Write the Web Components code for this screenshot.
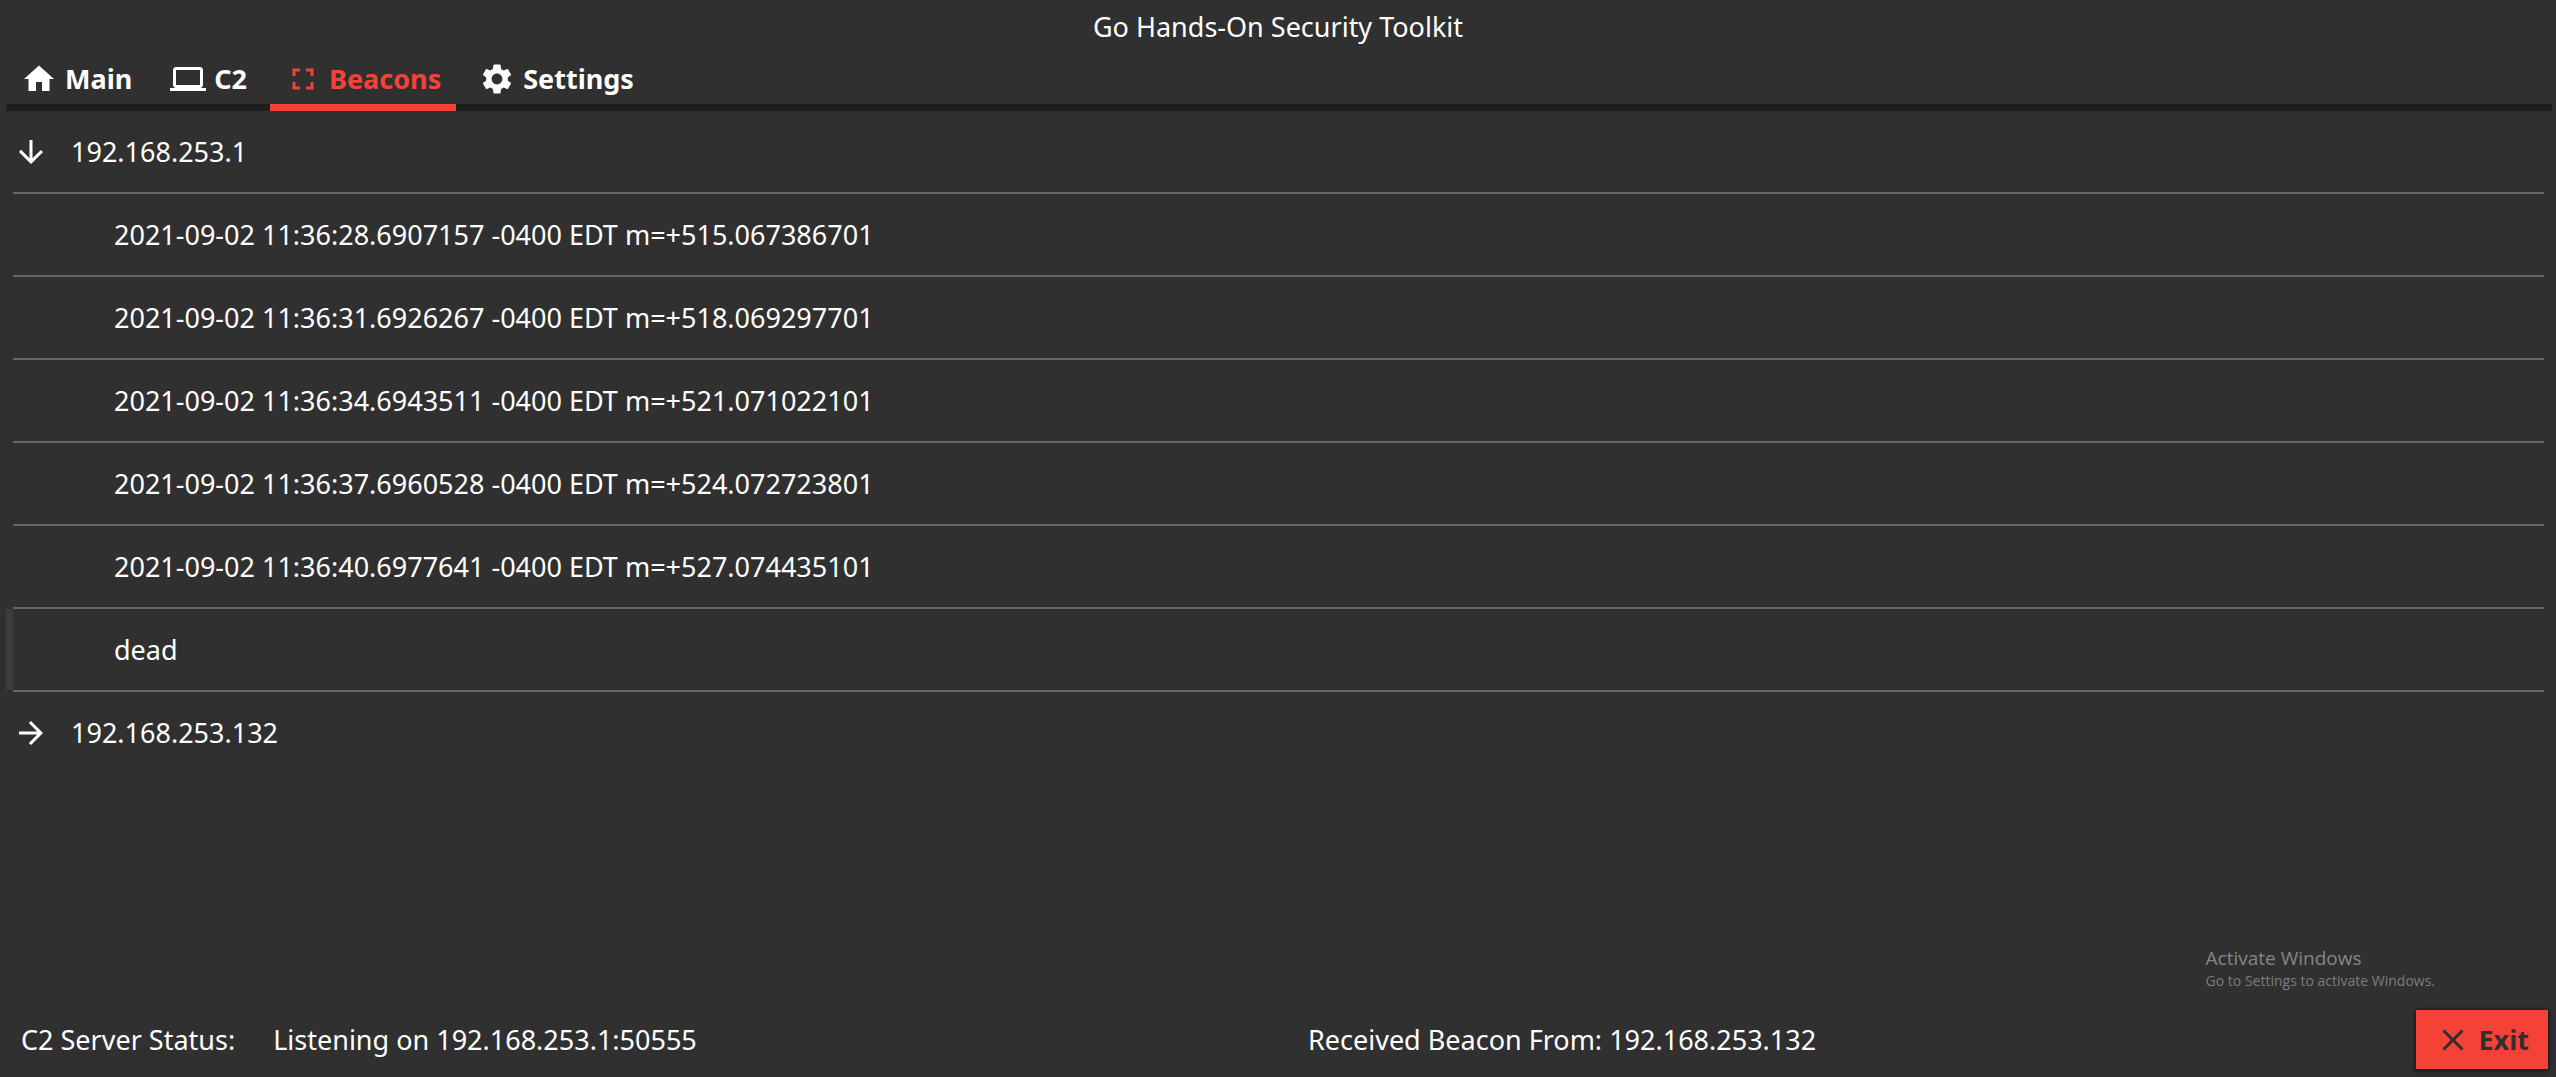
<!DOCTYPE html>
<html lang="en">
<head>
<meta charset="utf-8">
<title>Go Hands-On Security Toolkit</title>
<style>
  html, body { margin: 0; height: 100%; }
  body {
    background: #303030;
    color: #fff;
    font: 27px/37px "Noto Sans", "Open Sans", sans-serif;
  }
</style>
</head>
<body>
<toolkit-app></toolkit-app>

<script>
const ICONS = {
  home: '<path d="M10 20v-6h4v6h5v-8h3L12 3 2 12h3v8z"/>',
  computer: '<path d="M20 18c1.1 0 1.99-.9 1.99-2L22 6c0-1.100-.9-2-2-2H4c-1.100 0-2 .9-2 2v10c0 1.100.9 2 2 2H0v2h24v-2h-4zM4 6h16v10H4V6z"/>',
  fullscreen: '<path d="M7 14H5v5h5v-2H7v-3zm-2-4h2V7h3V5H5v5zm12 7h-3v2h5v-5h-2v3zM14 5v2h3v3h2V5h-5z"/>',
  settings: '<path d="M19.140 12.940c.04-.3.06-.61.06-.94 0-.32-.02-.64-.07-.94l2.030-1.580c.18-.14.23-.41.12-.61l-1.920-3.320c-.12-.22-.37-.29-.59-.22l-2.390.96c-.5-.38-1.030-.7-1.620-.94l-.36-2.540c-.04-.24-.24-.41-.48-.41h-3.840c-.24 0-.43.17-.47.41l-.36 2.540c-.59.24-1.130.57-1.620.94l-2.390-.96c-.22-.08-.47 0-.59.22L2.740 8.870c-.12.21-.08.47.12.61l2.030 1.580c-.05.3-.09.63-.09.94s.02.64.07.94l-2.030 1.580c-.18.14-.23.41-.12.61l1.920 3.320c.12.22.37.29.59.22l2.390-.96c.5.38 1.030.7 1.620.94l.36 2.540c.05.24.24.41.48.41h3.840c.24 0 .44-.17.47-.41l.36-2.540c.59-.24 1.130-.56 1.620-.94l2.390.96c.22.08.47 0 .59-.22l1.920-3.320c.12-.22.07-.47-.12-.61l-2.010-1.580zM12 15.600c-1.980 0-3.600-1.620-3.600-3.600s1.620-3.600 3.600-3.600 3.600 1.620 3.600 3.600-1.620 3.600-3.600 3.600z"/>',
  down: '<path d="M20 12l-1.410-1.410L13 16.170V4h-2v12.170l-5.580-5.590L4 12l8 8 8-8z"/>',
  next: '<path d="M12 4l-1.410 1.410L16.170 11H4v2h12.170l-5.580 5.590L12 20l8-8z"/>',
  close: '<path d="M19 6.410L17.590 5 12 10.590 6.410 5 5 6.410 10.590 12 5 17.590 6.410 19 12 13.410 17.590 19 19 17.590 13.410 12z"/>'
};

function shadow(host, html) {
  host.attachShadow({ mode: 'open' }).innerHTML = html;
}

customElements.define('tk-icon', class extends HTMLElement {
  connectedCallback() {
    if (this.shadowRoot) return;
    shadow(this, `
      <style>
        :host { display: block; flex: none; width: 36px; height: 36px; }
        svg { display: block; width: 100%; height: 100%; fill: currentColor; }
      </style>
      <svg viewBox="0 0 24 24" aria-hidden="true">${ICONS[this.getAttribute('name')] || ''}</svg>`);
  }
});

customElements.define('tk-tab', class extends HTMLElement {
  connectedCallback() {
    if (this.shadowRoot) return;
    shadow(this, `
      <style>
        :host { display: block; }
        button {
          display: flex; align-items: center; gap: 8px;
          box-sizing: border-box; height: 51px; padding: 0 15px 7px;
          border: 0; border-bottom: 7px solid transparent; background: none;
          color: inherit; font: inherit; font-weight: 700; cursor: pointer;
        }
        :host([selected]) button { color: #f44336; border-bottom-color: #f44336; }
      </style>
      <button type="button" role="tab" aria-selected="${this.hasAttribute('selected')}">
        <tk-icon name="${this.getAttribute('icon')}"></tk-icon><slot></slot>
      </button>`);
  }
});

customElements.define('tk-tabs', class extends HTMLElement {
  connectedCallback() {
    if (this.shadowRoot) return;
    shadow(this, `
      <style>
        :host { display: block; margin: 0 4px 0 6px; }
        div {
          display: flex; gap: 8px;
          background: linear-gradient(#1e1e1e, #1e1e1e) bottom / 100% 7px no-repeat;
        }
      </style>
      <div role="tablist"><slot></slot></div>`);
  }
});

customElements.define('tk-tree-row', class extends HTMLElement {
  connectedCallback() {
    if (this.shadowRoot) return;
    const icon = this.getAttribute('icon');
    shadow(this, `
      <style>
        :host { display: flex; height: 83px; }
        .marker { flex: none; width: 7px; margin-bottom: 2px; }
        :host([hovered]) .marker { background: #3d3d3d; }
        .body {
          flex: 1; display: flex; align-items: center; gap: 22px;
          border-bottom: 2px solid #666;
        }
        :host([child]) .body { padding-left: 101px; }
        :host(:last-child) .body { border-bottom-color: transparent; }
      </style>
      <span class="marker"></span>
      <div class="body">${icon ? `<tk-icon name="${icon}"></tk-icon>` : ''}<span><slot></slot></span></div>`);
    this.setAttribute('role', 'treeitem');
    this.setAttribute('aria-level', this.hasAttribute('child') ? '2' : '1');
  }
});

customElements.define('tk-button', class extends HTMLElement {
  connectedCallback() {
    if (this.shadowRoot) return;
    shadow(this, `
      <style>
        :host { display: block; }
        button {
          display: flex; align-items: center; gap: 7px;
          height: 59px; padding: 0 19px; border: 0;
          background: #f44336; color: #303030;
          font: inherit; font-weight: 700; cursor: pointer;
          box-shadow: 0 1px 4px 1px rgba(0, 0, 0, .6);
        }
      </style>
      <button type="button"><tk-icon name="${this.getAttribute('icon')}"></tk-icon><slot></slot></button>`);
  }
});

customElements.define('tk-status-bar', class extends HTMLElement {
  connectedCallback() {
    if (this.shadowRoot) return;
    shadow(this, `
      <style>
        :host { display: grid; grid-template-columns: 1fr 1fr; align-items: center; padding: 0 8px 8px 0; }
        .server { display: flex; gap: 38px; padding-left: 21px; }
        .last { display: flex; align-items: center; justify-content: space-between; padding-left: 34px; }
      </style>
      <div class="server"><slot name="label"></slot><slot name="server"></slot></div>
      <div class="last"><slot name="beacon"></slot><slot name="action"></slot></div>`);
  }
});

customElements.define('activation-notice', class extends HTMLElement {
  connectedCallback() {
    if (this.shadowRoot) return;
    shadow(this, `
      <style>
        :host {
          position: absolute; right: 121px; bottom: 86px;
          font-family: "Open Sans", "Noto Sans", sans-serif; pointer-events: none;
        }
        p { margin: 0; }
        .title { font-size: 19px; line-height: 24px; color: #868686; }
        .hint { font-size: 14px; line-height: 21px; color: #7c7c7c; }
      </style>
      <p class="title">Activate Windows</p>
      <p class="hint">Go to Settings to activate Windows.</p>`);
  }
});

customElements.define('toolkit-app', class extends HTMLElement {
  connectedCallback() {
    if (this.shadowRoot) return;
    shadow(this, `
      <style>
        :host { position: relative; display: flex; flex-direction: column; min-height: 100%; }
        h1 { margin: 0; padding: 8px 0 15px; font-size: inherit; font-weight: 400; text-align: center; }
        main { flex: 1; padding: 0 12px 0 6px; }
      </style>
      <h1>Go Hands-On Security Toolkit</h1>
      <tk-tabs>
        <tk-tab icon="home">Main</tk-tab>
        <tk-tab icon="computer">C2</tk-tab>
        <tk-tab icon="fullscreen" selected>Beacons</tk-tab>
        <tk-tab icon="settings">Settings</tk-tab>
      </tk-tabs>
      <main role="tree">
        <tk-tree-row icon="down">192.168.253.1</tk-tree-row>
        <tk-tree-row child>2021-09-02 11:36:28.6907157 -0400 EDT m=+515.067386701</tk-tree-row>
        <tk-tree-row child>2021-09-02 11:36:31.6926267 -0400 EDT m=+518.069297701</tk-tree-row>
        <tk-tree-row child>2021-09-02 11:36:34.6943511 -0400 EDT m=+521.071022101</tk-tree-row>
        <tk-tree-row child>2021-09-02 11:36:37.6960528 -0400 EDT m=+524.072723801</tk-tree-row>
        <tk-tree-row child>2021-09-02 11:36:40.6977641 -0400 EDT m=+527.074435101</tk-tree-row>
        <tk-tree-row child hovered>dead</tk-tree-row>
        <tk-tree-row icon="next">192.168.253.132</tk-tree-row>
      </main>
      <tk-status-bar>
        <span slot="label">C2 Server Status:</span>
        <span slot="server">Listening on 192.168.253.1:50555</span>
        <span slot="beacon">Received Beacon From: 192.168.253.132</span>
        <tk-button slot="action" icon="close">Exit</tk-button>
      </tk-status-bar>
      <activation-notice></activation-notice>`);
  }
});
</script>
</body>
</html>
